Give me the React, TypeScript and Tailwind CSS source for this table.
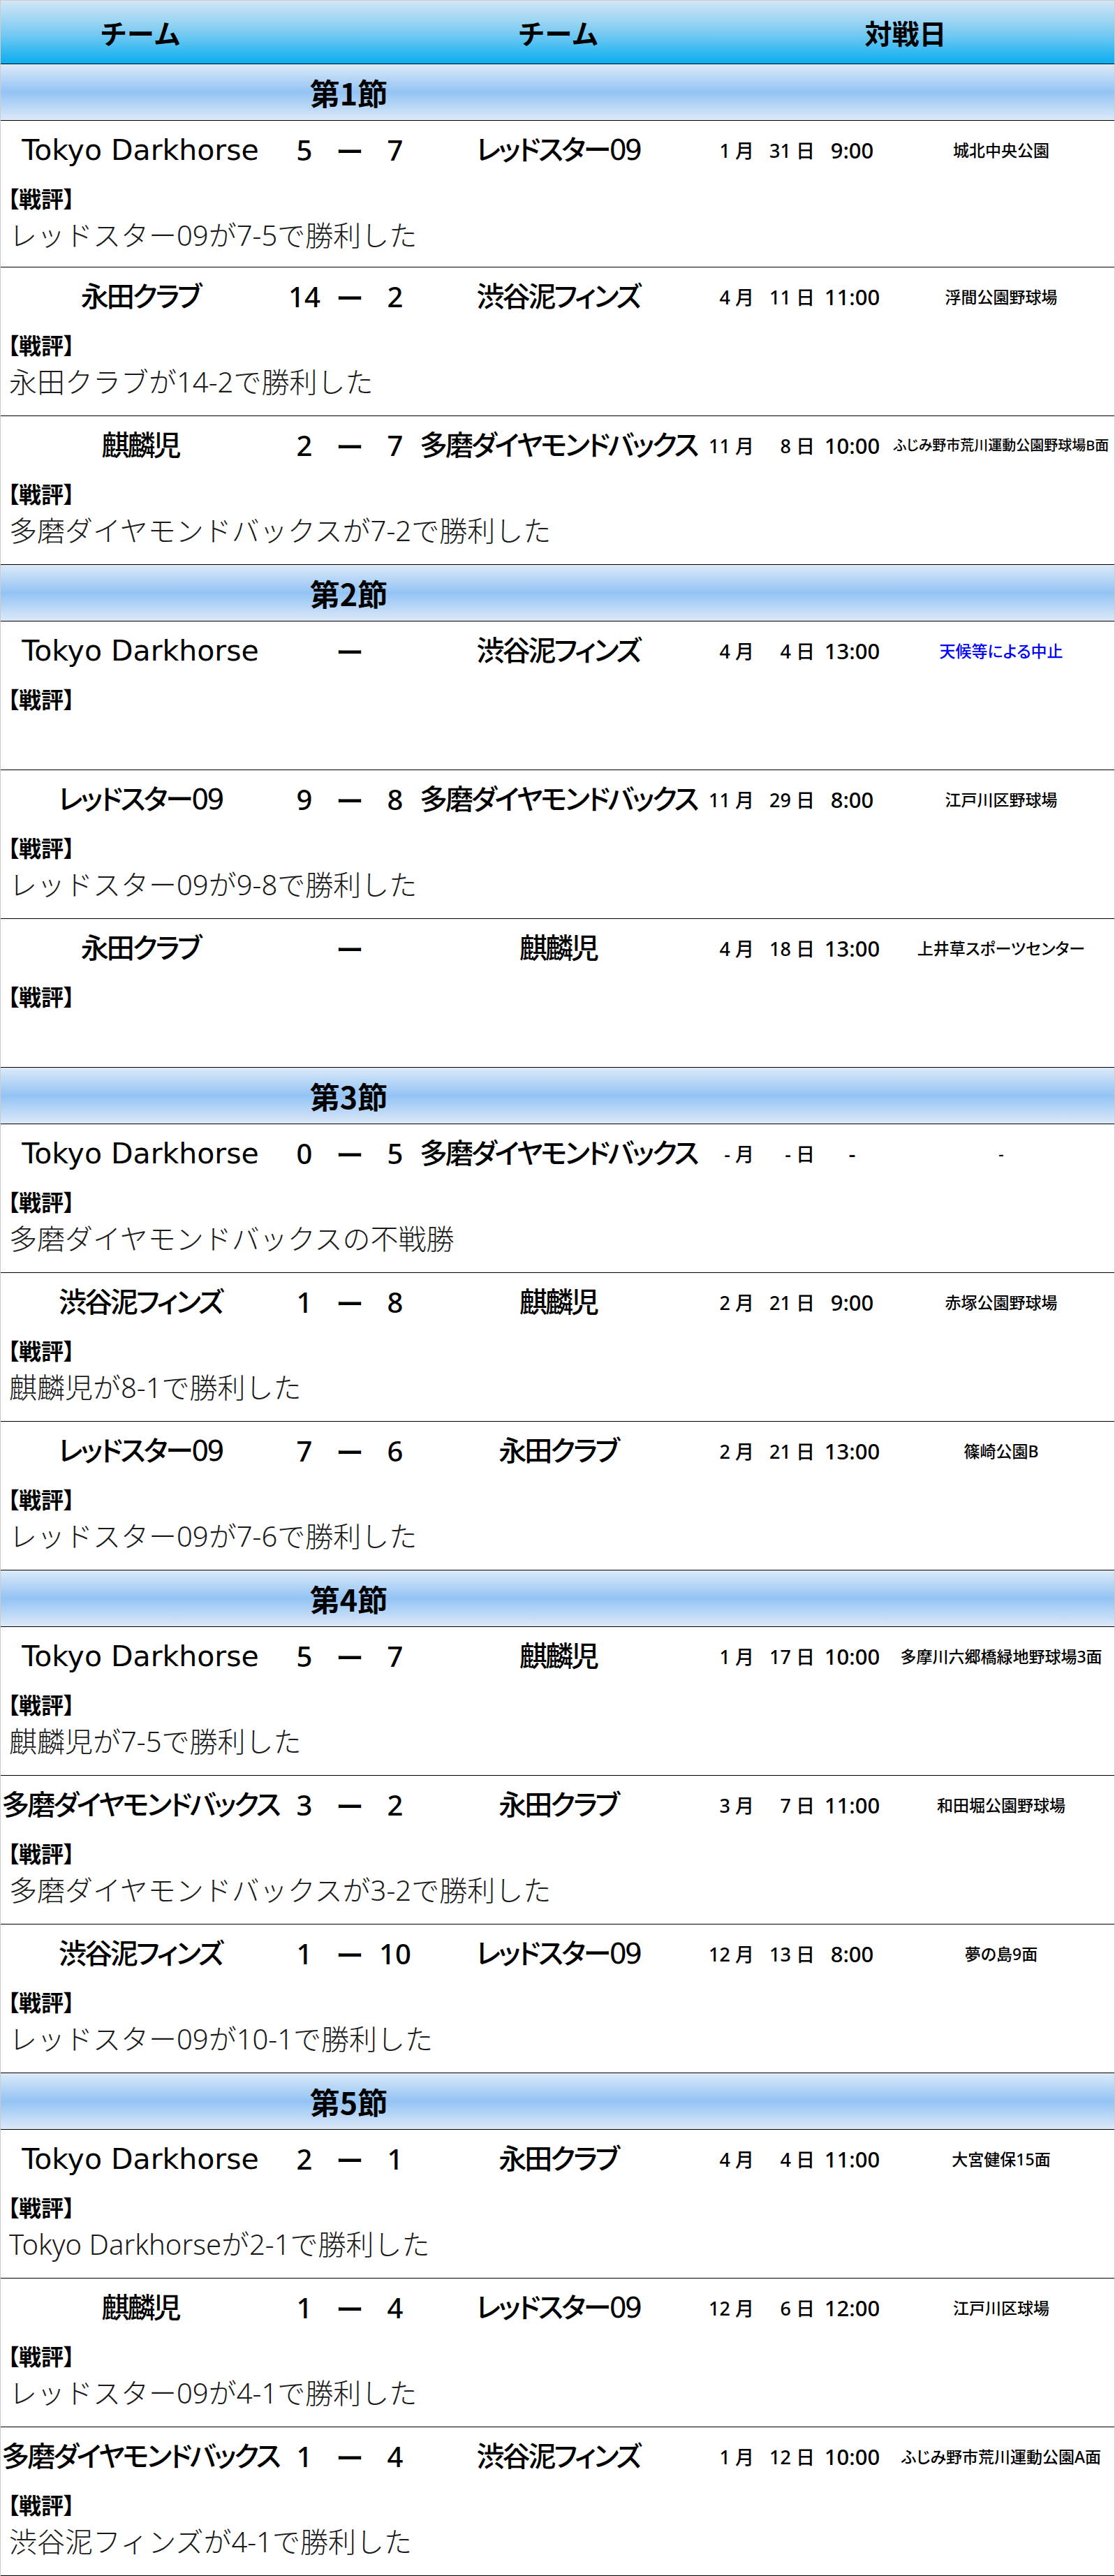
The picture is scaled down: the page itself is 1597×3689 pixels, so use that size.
import React from "react";

interface IMatch {
  home: string;
  away: string;
  hs: string;
  as: string;
  month: string;
  day: string;
  time: string;
  venue: string;
  comment: string;
  cancel?: boolean;
  smallVenue?: boolean;
}

const rounds: { title: string; matches: IMatch[] }[] = [
  {
    title: "第1節",
    matches: [
      { home: "Tokyo Darkhorse", hs: "5", as: "7", away: "レッドスター09", month: "1", day: "31", time: "9:00", venue: "城北中央公園", comment: "レッドスター09が7-5で勝利した" },
      { home: "永田クラブ", hs: "14", as: "2", away: "渋谷泥フィンズ", month: "4", day: "11", time: "11:00", venue: "浮間公園野球場", comment: "永田クラブが14-2で勝利した" },
      { home: "麒麟児", hs: "2", as: "7", away: "多磨ダイヤモンドバックス", month: "11", day: "8", time: "10:00", venue: "ふじみ野市荒川運動公園野球場B面", comment: "多磨ダイヤモンドバックスが7-2で勝利した", smallVenue: true },
    ],
  },
  {
    title: "第2節",
    matches: [
      { home: "Tokyo Darkhorse", hs: "", as: "", away: "渋谷泥フィンズ", month: "4", day: "4", time: "13:00", venue: "天候等による中止", comment: "", cancel: true },
      { home: "レッドスター09", hs: "9", as: "8", away: "多磨ダイヤモンドバックス", month: "11", day: "29", time: "8:00", venue: "江戸川区野球場", comment: "レッドスター09が9-8で勝利した" },
      { home: "永田クラブ", hs: "", as: "", away: "麒麟児", month: "4", day: "18", time: "13:00", venue: "上井草スポーツセンター", comment: "" },
    ],
  },
  {
    title: "第3節",
    matches: [
      { home: "Tokyo Darkhorse", hs: "0", as: "5", away: "多磨ダイヤモンドバックス", month: "-", day: "-", time: "-", venue: "-", comment: "多磨ダイヤモンドバックスの不戦勝" },
      { home: "渋谷泥フィンズ", hs: "1", as: "8", away: "麒麟児", month: "2", day: "21", time: "9:00", venue: "赤塚公園野球場", comment: "麒麟児が8-1で勝利した" },
      { home: "レッドスター09", hs: "7", as: "6", away: "永田クラブ", month: "2", day: "21", time: "13:00", venue: "篠崎公園B", comment: "レッドスター09が7-6で勝利した" },
    ],
  },
  {
    title: "第4節",
    matches: [
      { home: "Tokyo Darkhorse", hs: "5", as: "7", away: "麒麟児", month: "1", day: "17", time: "10:00", venue: "多摩川六郷橋緑地野球場3面", comment: "麒麟児が7-5で勝利した" },
      { home: "多磨ダイヤモンドバックス", hs: "3", as: "2", away: "永田クラブ", month: "3", day: "7", time: "11:00", venue: "和田堀公園野球場", comment: "多磨ダイヤモンドバックスが3-2で勝利した" },
      { home: "渋谷泥フィンズ", hs: "1", as: "10", away: "レッドスター09", month: "12", day: "13", time: "8:00", venue: "夢の島9面", comment: "レッドスター09が10-1で勝利した" },
    ],
  },
  {
    title: "第5節",
    matches: [
      { home: "Tokyo Darkhorse", hs: "2", as: "1", away: "永田クラブ", month: "4", day: "4", time: "11:00", venue: "大宮健保15面", comment: "Tokyo Darkhorseが2-1で勝利した" },
      { home: "麒麟児", hs: "1", as: "4", away: "レッドスター09", month: "12", day: "6", time: "12:00", venue: "江戸川区球場", comment: "レッドスター09が4-1で勝利した" },
      { home: "多磨ダイヤモンドバックス", hs: "1", as: "4", away: "渋谷泥フィンズ", month: "1", day: "12", time: "10:00", venue: "ふじみ野市荒川運動公園A面", comment: "渋谷泥フィンズが4-1で勝利した" },
    ],
  },
];

// latin names keep normal spacing, japanese ones get squeezed like the original font
function Team({ name }: { name: string }) {
  const latin = /^[A-Za-z ]+$/.test(name);
  return (
    <div
      className={
        latin
          ? "text-center text-[41px] leading-none font-medium font-['DejaVu_Sans','Noto_Sans_CJK_JP',sans-serif]"
          : "text-center text-[40px] leading-none font-medium tracking-[-3px] font-['DejaVu_Sans','Noto_Sans_CJK_JP',sans-serif] [font-feature-settings:'palt']"
      }
    >
      {name}
    </div>
  );
}

function MatchRow({ m, short }: { m: IMatch; short: boolean }) {
  return (
    <div className={short ? "h-[210px] border-b border-black" : "h-[213px] border-b border-black"}>
      <div className="grid h-[84px] grid-cols-[400px_70px_60px_70px_397px_86px_85px_103px_1fr] items-center whitespace-nowrap text-black">
        <Team name={m.home} />
        <div className="text-center text-[40px] leading-none font-medium font-['Noto_Sans','Noto_Sans_CJK_JP',sans-serif]">{m.hs}</div>
        <div className="text-center text-[40px] leading-none font-medium font-['Noto_Sans_CJK_JP',sans-serif]">ー</div>
        <div className="text-center text-[40px] leading-none font-medium font-['Noto_Sans','Noto_Sans_CJK_JP',sans-serif]">{m.as}</div>
        <Team name={m.away} />
        <div className="pr-1 text-right text-[27px] leading-none font-medium font-['Noto_Sans','Noto_Sans_CJK_JP',sans-serif]">
          {m.month} 月
        </div>
        <div className="pr-[2px] text-right text-[27px] leading-none font-medium font-['Noto_Sans','Noto_Sans_CJK_JP',sans-serif]">
          {m.day} 日
        </div>
        <div className="text-center text-[31px] leading-none font-medium font-['Noto_Sans','Noto_Sans_CJK_JP',sans-serif]">{m.time}</div>
        <div
          className={
            (m.cancel ? "text-[#0000ff] " : "text-black ") +
            (m.smallVenue ? "text-[20px] " : "text-[23px] ") +
            "text-center leading-none font-medium font-['Noto_Sans','Noto_Sans_CJK_JP',sans-serif] [font-feature-settings:'palt']"
          }
        >
          {m.venue}
        </div>
      </div>
      <div className="flex h-[52px] items-center pl-[10px] text-[32px] leading-none font-bold text-black font-['Noto_Sans_CJK_JP',sans-serif] [font-feature-settings:'palt']">
        【戦評】
      </div>
      <div className="flex h-[56px] items-center pl-3 text-[40px] leading-none font-light text-[#1a1a1a] font-['Noto_Sans','Noto_Sans_CJK_JP',sans-serif]">
        {m.comment}
      </div>
    </div>
  );
}

export default function App() {
  return (
    <main className="w-[1597px] bg-white border-x border-t border-[#cccccc] font-['Noto_Sans_CJK_JP',sans-serif]">
      <div className="grid h-[91px] grid-cols-[400px_70px_60px_70px_397px_86px_85px_103px_1fr] items-center border-b border-black bg-[linear-gradient(to_bottom,#d3e6f5,#7ccbf2_50%,#0aaef0)] text-[39px] font-bold leading-none text-black">
        <div className="text-center">チーム</div>
        <div className="col-span-3"></div>
        <div className="text-center">チーム</div>
        <div className="col-span-4 text-center">対戦日</div>
      </div>
      {rounds.map((r, si) => (
        <section key={r.title}>
          <div className="grid h-[81px] grid-cols-[997px_1fr] items-center border-b border-black bg-[linear-gradient(to_bottom,#dbeaf8,#93c3f4_50%,#dce9f8)] text-[43px] font-bold leading-none text-black">
            <div className="text-center">{r.title}</div>
            <div></div>
          </div>
          {r.matches.map((m, mi) => (
            <MatchRow key={mi} m={m} short={si === 0 && mi === 0} />
          ))}
        </section>
      ))}
    </main>
  );
}
